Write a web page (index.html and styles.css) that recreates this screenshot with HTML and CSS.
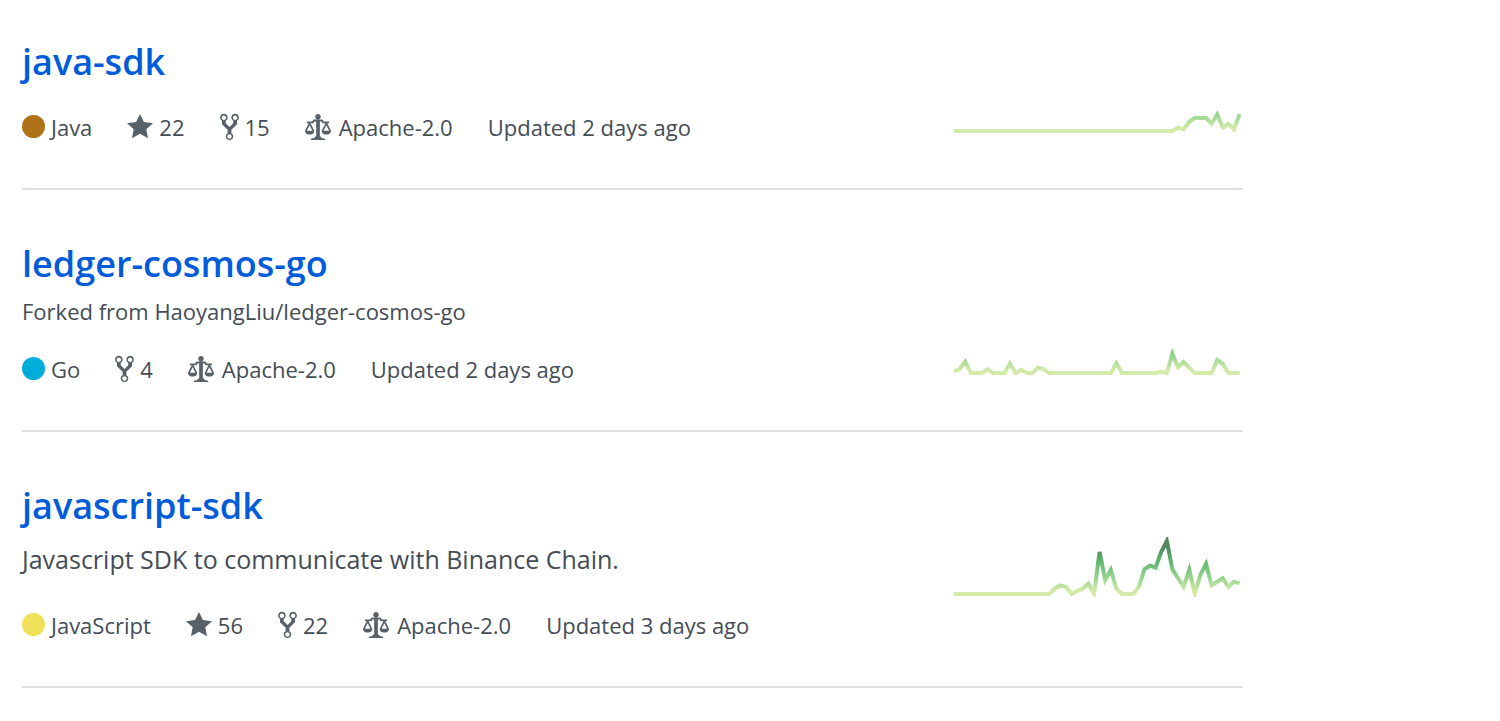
FILE: index.html
```
<!DOCTYPE html>
<html lang="en">
<head>
<meta charset="UTF-8" />
<meta name="viewport" content="width=device-width, initial-scale=1" />
<title>Repositories</title>
<link rel="stylesheet" href="styles.css">
</head>
<body>

<!-- shared icons and graph gradient -->
<svg class="defs" aria-hidden="true">
  <symbol id="star" viewBox="0 0 14 16">
    <path fill-rule="evenodd" d="M14 6l-4.9-.64L7 1 4.9 5.36 0 6l3.6 3.26L2.67 14 7 11.67 11.33 14l-.93-4.74L14 6z"/>
  </symbol>
  <symbol id="fork" viewBox="0 0 10 16">
    <path fill-rule="evenodd" d="M8 1a1.993 1.993 0 00-1 3.72V6L5 8 3 6V4.72A1.993 1.993 0 002 1a1.993 1.993 0 00-1 3.72V6.5l3 3v1.78A1.993 1.993 0 005 15a1.993 1.993 0 001-3.72V9.5l3-3V4.72A1.993 1.993 0 008 1zM2 4.2C1.34 4.2.8 3.65.8 3c0-.65.55-1.2 1.2-1.2.65 0 1.2.55 1.2 1.2 0 .65-.55 1.2-1.2 1.2zm3 10c-.66 0-1.2-.55-1.2-1.2 0-.65.55-1.2 1.2-1.2.65 0 1.2.55 1.2 1.2 0 .65-.55 1.2-1.2 1.2zm3-10c-.66 0-1.2-.55-1.2-1.2 0-.65.55-1.2 1.2-1.2.65 0 1.2.55 1.2 1.2 0 .65-.55 1.2-1.2 1.2z"/>
  </symbol>
  <symbol id="law" viewBox="0 0 14 16">
    <path fill-rule="evenodd" d="M7 4c-.83 0-1.5-.67-1.5-1.5S6.17 1 7 1s1.5.67 1.5 1.5S7.83 4 7 4zm7 6c0 1.11-.89 2-2 2h-1c-1.11 0-2-.89-2-2l2-4h-1c-.55 0-1-.45-1-1H8v8c.42 0 1 .45 1 1h1c.42 0 1 .45 1 1H3c0-.55.58-1 1-1h1c0-.55.58-1 1-1h.03L6 5H5c0 .55-.45 1-1 1H3l2 4c0 1.11-.89 2-2 2H2c-1.11 0-2-.89-2-2l2-4H1V5h3c0-.55.45-1 1-1h4c.55 0 1 .45 1 1h3v1h-1l2 4zM2.5 7L1 10h3L2.5 7zM13 10l-1.5-3-1.5 3h3z"/>
  </symbol>
  <linearGradient id="heat" gradientUnits="userSpaceOnUse" x1="0" y1="60" x2="0" y2="4">
    <stop offset="10%" stop-color="#c6e48b"/>
    <stop offset="33%" stop-color="#7bc96f"/>
    <stop offset="66%" stop-color="#239a3b"/>
    <stop offset="90%" stop-color="#196127"/>
  </linearGradient>
</svg>

<ul class="repo-list">
  <li class="repo">
    <div class="info">
      <h3><a href="#">java-sdk</a></h3>
      <div class="meta">
        <span class="lang"><span class="dot java"></span>Java</span>
        <a href="#"><svg class="icon" role="img" aria-label="stars"><use href="#star"/></svg>22</a>
        <a href="#"><svg class="icon narrow" role="img" aria-label="forks"><use href="#fork"/></svg>15</a>
        <span class="license"><svg class="icon" aria-hidden="true"><use href="#law"/></svg>Apache-2.0</span>
        <span>Updated 2 days ago</span>
      </div>
    </div>
    <svg class="graph" viewBox="0 0 289 60" data-year="0*40 3.3 1.7 9.3 13*3 7.3 16.5 3.3 7 1.5 16.7"></svg>
  </li>

  <li class="repo">
    <div class="info">
      <h3><a href="#">ledger-cosmos-go</a></h3>
      <p class="forked">Forked from <a href="#">HaoyangLiu/ledger-cosmos-go</a></p>
      <div class="meta">
        <span class="lang"><span class="dot go"></span>Go</span>
        <a href="#"><svg class="icon narrow" role="img" aria-label="forks"><use href="#fork"/></svg>4</a>
        <span class="license"><svg class="icon" aria-hidden="true"><use href="#law"/></svg>Apache-2.0</span>
        <span>Updated 2 days ago</span>
      </div>
    </div>
    <svg class="graph" viewBox="0 0 289 60" data-year="1.7 3.7 11.3 0*3 3.7 0*3 9.3 0 3.3 0*2 5.3 3.7 0*12 9.5 0*7 1.3 0 19 5.7 11 5.3 0*4 13 9 0*3"></svg>
  </li>

  <li class="repo">
    <div class="info">
      <h3><a href="#">javascript-sdk</a></h3>
      <p class="description">Javascript SDK to communicate with Binance Chain.</p>
      <div class="meta">
        <span class="lang"><span class="dot javascript"></span>JavaScript</span>
        <a href="#"><svg class="icon" role="img" aria-label="stars"><use href="#star"/></svg>56</a>
        <a href="#"><svg class="icon narrow" role="img" aria-label="forks"><use href="#fork"/></svg>22</a>
        <span class="license"><svg class="icon" aria-hidden="true"><use href="#law"/></svg>Apache-2.0</span>
        <span>Updated 3 days ago</span>
      </div>
    </div>
    <svg class="graph middle" viewBox="0 0 289 60" data-year="0*18 5.3 8.7 7 0 3.3 5.3 10.3 0 42 14 24 5.3 0*3 7 24.7 28.3 26.3 42 53 24.7 15.7 7 24 0 19.3 30 8.7 12.3 15.7 7 12.3 10.7"></svg>
  </li>
</ul>

<script>
  // One value per week, "v*n" repeats a value n times
  document.querySelectorAll('.graph').forEach(graph => {
    const weeks = graph.dataset.year.split(' ').flatMap(part => {
      const [value, count] = part.split('*');
      return Array(Number(count || 1)).fill(Number(value));
    });
    const line = document.createElementNS('http://www.w3.org/2000/svg', 'polyline');
    line.setAttribute('points', weeks.map((value, i) => `${(i * 5.6).toFixed(1)},${57 - value}`).join(' '));
    graph.appendChild(line);
  });
</script>

</body>
</html>
```
FILE: styles.css
```
* {
  box-sizing: border-box;
}
body {
  margin: 0;
  background: #fff;
  color: #444d56;
  font-family: 'Open Sans', 'Noto Sans', sans-serif;
  font-size: 22px;
  line-height: 34px;
}
a {
  color: inherit;
  text-decoration: none;
}
.defs {
  display: block;
  width: 0;
  height: 0;
}
.repo-list {
  list-style: none;
  margin: 0 257px 0 22px;
  padding: 0;
}
.repo {
  display: flex;
  justify-content: space-between;
  align-items: flex-end;
  padding: 46px 0 44px;
  border-bottom: 2px solid #dcdfe4;
}
.repo:first-child {
  padding-top: 34px;
}
h3 {
  margin: 0;
  font-size: 36px;
  font-weight: 600;
  line-height: 56px;
  color: #005cd8;
}
p {
  margin: 0;
}
.forked {
  margin: 2px 0 24px;
}
.description {
  margin: 6px 0 30px;
  font-size: 25px;
  line-height: 38px;
}
.meta {
  display: flex;
  align-items: center;
  gap: 35px;
  margin-top: 20px;
}
.meta > * {
  display: flex;
  align-items: center;
  gap: 6px;
}
.dot {
  width: 23px;
  height: 23px;
  margin-bottom: 2px;
  border-radius: 50%;
}
.java {
  background: #b07219;
}
.go {
  background: #00add8;
}
.javascript {
  background: #f1e05a;
}
.icon {
  width: 26px;
  height: 30px;
  fill: #586069;
}
.icon.narrow {
  width: 19px;
}
.meta .license {
  gap: 8px;
}
.graph {
  width: 289px;
  height: 60px;
  margin-bottom: 10px;
  opacity: 0.75;
}
.graph.middle {
  align-self: center;
  margin: 14px 0 0;
}
.graph polyline {
  fill: none;
  stroke: url(#heat);
  stroke-width: 4;
}
```
